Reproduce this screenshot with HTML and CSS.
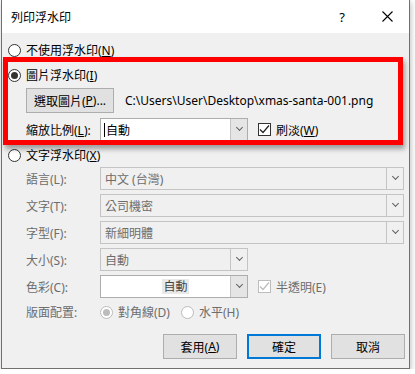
FILE: index.html
```html
<!DOCTYPE html>
<html lang="zh-Hant">
<head>
    <meta charset="UTF-8">
    <title>列印浮水印</title>
    <link rel="stylesheet" href="styles.css">
</head>
<body>
    <div class="dialog">
        <!-- Title bar -->
        <div class="titlebar">
            <span class="title">列印浮水印</span>
            <span class="help">?</span>
            <svg class="close" width="11" height="11" viewBox="0 0 11 11">
                <path d="M0.5 0.5 L10.5 10.5 M10.5 0.5 L0.5 10.5" stroke="#000" stroke-width="1.1" fill="none"/>
            </svg>
        </div>

        <div class="content">
            <div class="radio-row first">
                <span class="radio"></span>
                <span>不使用浮水印(<u>N</u>)</span>
            </div>

            <div class="radio-row">
                <span class="radio checked"></span>
                <span>圖片浮水印(<u>I</u>)</span>
            </div>
            <div class="pick-row">
                <button class="btn pick">選取圖片(<u>P</u>)...</button>
                <span class="path">C:\Users\User\Desktop\xmas-santa-001.png</span>
            </div>
            <div class="form-row scale-row">
                <span class="label">縮放比例(<u>L</u>):</span>
                <div class="combo narrow white">
                    <span class="value"><span class="caret"></span>自動</span>
                    <span class="arrow"></span>
                </div>
                <span class="check"><svg width="11" height="11" viewBox="0 0 11 11"><path d="M1 5.5 L4 8.5 L10 1.5" stroke="#222" stroke-width="1.2" fill="none"/></svg></span>
                <span>刷淡(<u>W</u>)</span>
            </div>

            <div class="radio-row text-mark">
                <span class="radio"></span>
                <span>文字浮水印(<u>X</u>)</span>
            </div>
            <div class="form-row field">
                <span class="label muted">語言(L):</span>
                <div class="combo disabled">
                    <span class="value">中文 (台灣)</span>
                    <span class="arrow"></span>
                </div>
            </div>
            <div class="form-row field">
                <span class="label muted">文字(T):</span>
                <div class="combo disabled">
                    <span class="value">公司機密</span>
                    <span class="arrow"></span>
                </div>
            </div>
            <div class="form-row field">
                <span class="label muted">字型(F):</span>
                <div class="combo disabled">
                    <span class="value">新細明體</span>
                    <span class="arrow"></span>
                </div>
            </div>
            <div class="form-row field">
                <span class="label muted">大小(S):</span>
                <div class="combo narrow disabled">
                    <span class="value">自動</span>
                    <span class="arrow"></span>
                </div>
            </div>
            <div class="form-row field">
                <span class="label muted">色彩(C):</span>
                <div class="combo narrow white">
                    <span class="value centered"><span class="chip">自動</span></span>
                    <span class="arrow"></span>
                </div>
                <span class="check off"><svg width="11" height="11" viewBox="0 0 11 11"><path d="M1 5.5 L4 8.5 L10 1.5" stroke="#bcbcbc" stroke-width="1.2" fill="none"/></svg></span>
                <span class="muted">半透明(E)</span>
            </div>
            <div class="form-row layout-row">
                <span class="label muted">版面配置:</span>
                <span class="radio off checked"></span>
                <span class="muted opt">對角線(D)</span>
                <span class="radio off"></span>
                <span class="muted">水平(H)</span>
            </div>

            <div class="buttons">
                <button class="btn">套用(<u>A</u>)</button>
                <button class="btn default">確定</button>
                <button class="btn">取消</button>
            </div>
        </div>

        <!-- highlight drawn over the picture watermark group -->
        <div class="highlight"></div>
    </div>
</body>
</html>
```

FILE: styles.css
```css
body {
    margin: 0;
    background-color: #ffffff;
    font-family: "Noto Sans", "Noto Sans CJK TC", sans-serif;
    font-size: 12px;
    color: #000;
}
.dialog {
    position: relative;
    margin-left: 1px;
    width: 407px;
    height: 368px;
    background-color: #f0f0f0;
    border: 1px solid #707070;
    border-top: none;
    box-shadow: 1px 2px 6px rgba(0, 0, 0, 0.25);
}
.titlebar {
    height: 33px;
    background-color: #ffffff;
    display: flex;
    align-items: center;
}
.title {
    margin-left: 9px;
    flex: 1;
}
.help {
    font-size: 13px;
    margin-right: 37px;
}
.close {
    margin-right: 16px;
}
.content {
    padding-left: 6px;
    display: flex;
    flex-direction: column;
}
u {
    text-decoration-thickness: 1px;
    text-underline-offset: 1px;
}
.radio-row {
    height: 20px;
    display: flex;
    align-items: center;
    margin-top: 5px;
}
.radio-row.first {
    margin-top: 7px;
}
.radio-row.text-mark {
    margin-top: 4px;
}
.radio {
    width: 11px;
    height: 11px;
    border: 1px solid #333;
    border-radius: 50%;
    background-color: #fff;
    margin-right: 5px;
    display: flex;
    align-items: center;
    justify-content: center;
    flex-shrink: 0;
}
.radio.checked::after {
    content: "";
    width: 7px;
    height: 7px;
    border-radius: 50%;
    background-color: #333;
}
.radio.off {
    border-color: #bcbcbc;
}
.radio.off::after {
    background-color: #bcbcbc;
}
.pick-row {
    display: flex;
    align-items: center;
    margin-top: 3px;
    padding-left: 18px;
}
.btn {
    font-family: inherit;
    font-size: 12px;
    color: #000;
    background-color: #e1e1e1;
    border: 1px solid #adadad;
    height: 25px;
    padding: 0;
    display: flex;
    align-items: center;
    justify-content: center;
}
.btn.pick {
    width: 88px;
}
.path {
    margin-left: 11px;
}
.form-row {
    display: flex;
    align-items: center;
    padding-left: 18px;
}
.label {
    width: 74px;
    flex-shrink: 0;
}
.muted {
    color: #6d6d6d;
}
.scale-row {
    margin-top: 5px;
}
.field {
    margin-top: 4px;
}
.text-mark + .field {
    margin-top: 2px;
}
.combo {
    width: 304px;
    height: 23px;
    box-sizing: border-box;
    border: 1px solid #adadad;
    display: flex;
}
.combo.narrow {
    width: 148px;
}
.combo.disabled {
    background-color: #f0f0f0;
    border-color: #c4c4c4;
}
.combo.disabled .value {
    color: #6d6d6d;
}
.combo.white {
    background-color: #fff;
}
.value {
    flex: 1;
    display: flex;
    align-items: center;
    padding-left: 4px;
}
.value.centered {
    justify-content: center;
    padding-left: 20px;
}
.chip {
    background-color: #e9e9e9;
    color: #444;
    padding: 0 1px;
    line-height: 15px;
}
.caret {
    width: 1px;
    height: 14px;
    background-color: #000;
    margin-right: 1px;
    margin-left: -1px;
}
.arrow {
    width: 16px;
    border-left: 1px solid #c4c4c4;
    background-color: #e5e5e5;
    display: flex;
    align-items: center;
    justify-content: center;
}
.combo.disabled .arrow {
    background-color: #f0f0f0;
}
.arrow::after {
    content: "";
    width: 4px;
    height: 4px;
    border-right: 1px solid #606060;
    border-bottom: 1px solid #606060;
    transform: translateY(-2px) rotate(45deg);
}
.check {
    width: 11px;
    height: 11px;
    border: 1px solid #333;
    background-color: #fff;
    margin-left: 10px;
    margin-right: 5px;
    display: flex;
    align-items: center;
    justify-content: center;
}
.check.off {
    border-color: #bcbcbc;
}
.layout-row {
    height: 20px;
    margin-top: 4px;
}
.opt {
    margin-right: 11px;
}
.buttons {
    display: flex;
    justify-content: flex-end;
    gap: 10px;
    margin-top: 12px;
    padding-right: 4px;
}
.buttons .btn {
    width: 74px;
}
.btn.default {
    border: 2px solid #0078d7;
}
.highlight {
    position: absolute;
    left: 1px;
    top: 57px;
    width: 390px;
    height: 78px;
    border: 5px solid #ff0000;
    box-shadow: 2px 4px 5px rgba(0, 0, 0, 0.35);
}
```
